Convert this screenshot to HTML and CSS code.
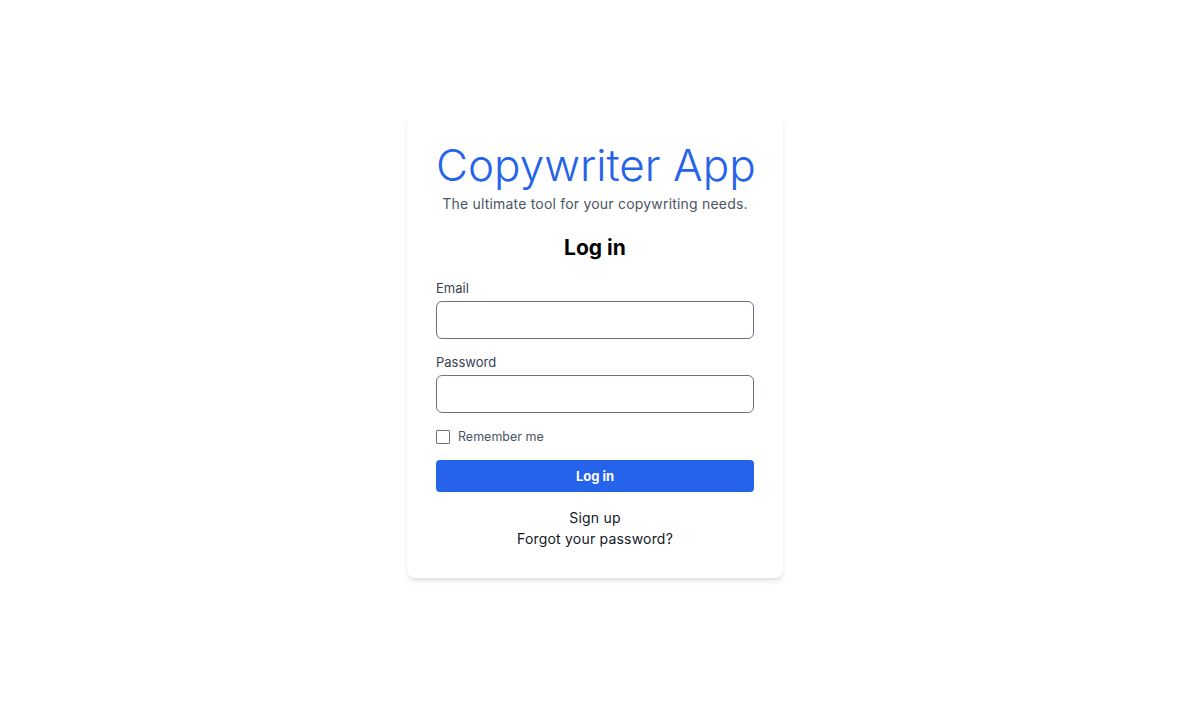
FILE: index.html
```html
<!DOCTYPE html>
<html>
<head>
<meta charset="utf-8">
<link rel="stylesheet" href="styles.css">
</head>
<body>
<div class="page">
  <div class="card">
    <h1 class="title">Copywriter App</h1>
    <p class="tagline">The ultimate tool for your copywriting needs.</p>
    <h2 class="heading">Log in</h2>
    <form class="form">
      <div class="field">
        <label class="label">Email</label>
        <input class="input" type="email">
      </div>
      <div class="field">
        <label class="label">Password</label>
        <input class="input" type="password">
      </div>
      <label class="remember"><span class="box"></span><span>Remember me</span></label>
      <button class="btn" type="button">Log in</button>
    </form>
    <div class="links">
      <a class="link">Sign up</a>
      <a class="link">Forgot your password?</a>
    </div>
  </div>
</div>
</body>
</html>
```

FILE: styles.css
```css
* { box-sizing: border-box; }
html, body { margin: 0; padding: 0; background: #fff; }
body { font-family: Inter, "Noto Sans", sans-serif; color: #111827; }
.page {
  height: 727px;
  display: flex;
  justify-content: center;
  padding-top: 114px;
}
.card {
  width: 376px;
  height: 464px;
  background: #fff;
  border-radius: 8px;
  box-shadow: 0 4px 6px -1px rgba(0,0,0,0.1), 0 2px 4px -2px rgba(0,0,0,0.1);
  padding: 28px 29px 0;
  display: flex;
  flex-direction: column;
  align-items: stretch;
}
.title {
  margin: 0;
  text-align: center;
  font-size: 44px;
  font-weight: 300;
  line-height: 46px;
  color: #2563eb;
  white-space: nowrap;
}
.tagline {
  margin: 6px 0 0;
  text-align: center;
  font-size: 14px;
  letter-spacing: 0.2px;
  line-height: 20px;
  color: #4b5563;
}
.heading {
  margin: 20px 0 0;
  text-align: center;
  font-size: 21px;
  line-height: 28px;
  font-weight: 700;
  color: #000;
}
.form { display: flex; flex-direction: column; margin-top: 17px; }
.field { display: flex; flex-direction: column; margin-bottom: 14px; }
.label {
  font-size: 13px;
  line-height: 18px;
  color: #374151;
  margin-bottom: 4px;
}
.input {
  height: 38px;
  border: 1px solid #6b7280;
  border-radius: 6px;
  background: #fff;
  font: inherit;
  padding: 0 10px;
}
.remember {
  display: flex;
  align-items: center;
  gap: 8px;
  margin-top: 1px;
  font-size: 12.5px;
  line-height: 18px;
  color: #4b5563;
}
.box {
  width: 14px;
  height: 14px;
  border: 1px solid #6b7280;
  border-radius: 1px;
  background: #fff;
}
.btn {
  margin-top: 14px;
  height: 32px;
  background: #2563eb;
  color: #fff;
  border: none;
  border-radius: 4px;
  font-family: inherit;
  font-size: 13px;
  font-weight: 700;
}
.links {
  margin-top: 15px;
  display: flex;
  flex-direction: column;
  align-items: center;
  font-size: 14px;
  letter-spacing: 0.2px;
  line-height: 21px;
}
.link { color: #111827; }
```
